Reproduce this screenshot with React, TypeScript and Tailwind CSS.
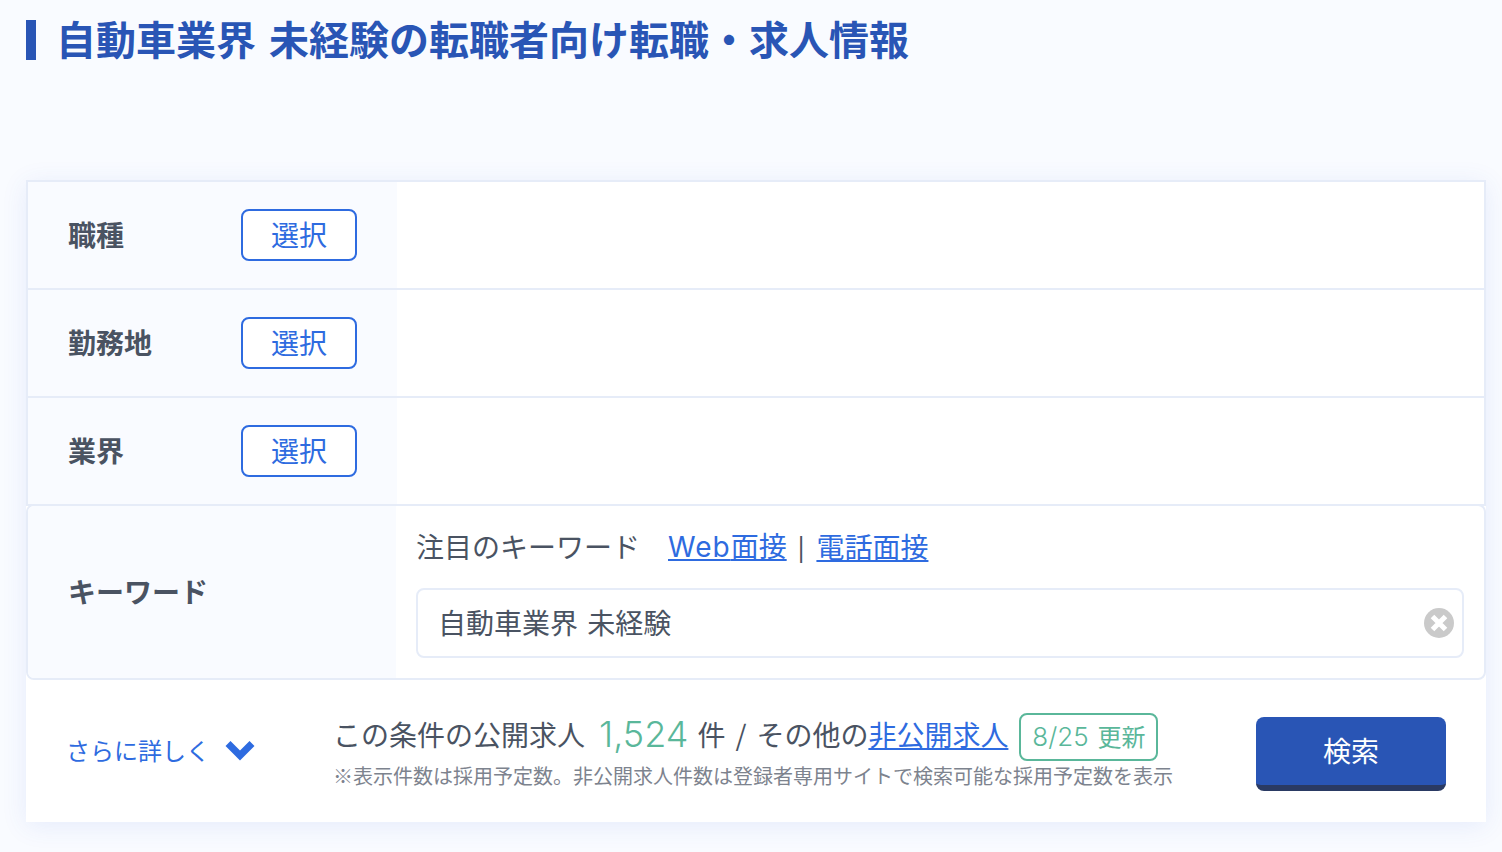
import React from "react";

const font = { fontFamily: '"Noto Sans CJK JP", "Noto Sans", sans-serif' };
const latin = { fontFamily: 'Inter, "Noto Sans CJK JP", sans-serif' };

// 職種・勤務地・業界の選択行
function SelectRow({ label }: { label: string }) {
  return (
    <div className="flex h-[110px] -mb-[2px] border-2 border-[#e6ecf8] bg-white">
      <div className="flex w-[369px] shrink-0 items-center justify-between bg-[#f9fbff] pl-[40px] pr-[40px]">
        <span className="pb-[2px] text-[28px] font-bold text-[#4a5362]">{label}</span>
        <button className="flex h-[52px] w-[116px] items-center justify-center rounded-[8px] border-2 border-[#2e6be0] bg-white pb-[2px] text-[28px] text-[#2e6be0]">
          選択
        </button>
      </div>
      <div className="flex-1" />
    </div>
  );
}

export default function App() {
  return (
    <div
      className="h-[852px] overflow-hidden bg-[#f9fbff] pl-[26px] pr-[16px] pt-[20px]"
      style={font}
    >
      <h1 className="flex h-[40px] items-center border-l-[10px] border-[#2955b5] pb-[4px] pl-[20px] text-[40px] font-bold leading-[40px] whitespace-nowrap text-[#2955b5] [word-spacing:4px]">
        自動車業界 未経験の転職者向け転職・求人情報
      </h1>

      <div className="mt-[120px] bg-white shadow-[0_4px_24px_rgba(60,100,220,0.1)]">
        <SelectRow label="職種" />
        <SelectRow label="勤務地" />
        <SelectRow label="業界" />

        <div className="flex h-[176px] overflow-hidden rounded-[8px] border-2 border-[#e6ecf8] bg-white">
          <div className="flex w-[368px] shrink-0 items-center bg-[#f9fbff] pl-[40px]">
            <span className="pb-[2px] text-[28px] font-bold text-[#4a5362]">キーワード</span>
          </div>
          <div className="flex flex-1 flex-col pl-[20px] pr-[20px] pt-[20px]">
            <div className="flex h-[40px] items-center text-[28px] whitespace-nowrap text-[#4a5362]">
              <span>注目のキーワード</span>
              <a className="ml-[28px] text-[#2e6be0] underline underline-offset-2">
                <span className="tracking-[1px]" style={latin}>Web</span>面接
              </a>
              <span className="ml-[11px] mr-[12px] text-[24px] font-medium">|</span>
              <a className="text-[#2e6be0] underline underline-offset-2">電話面接</a>
            </div>
            <div className="relative mt-[22px] flex h-[70px] items-center rounded-[8px] border-2 border-[#e6ecf8] pb-[2px] pl-[20px] text-[28px] text-[#4a5362] [word-spacing:3px]">
              自動車業界 未経験
              <svg
                className="absolute right-[8px] top-[18px]"
                width="30"
                height="30"
                viewBox="0 0 30 30"
              >
                <circle cx="15" cy="15" r="15" fill="#cacaca" />
                <path d="M8.5 8.5 21.5 21.5M21.5 8.5 8.5 21.5" stroke="#fff" strokeWidth="5" />
              </svg>
            </div>
          </div>
        </div>

        <div className="flex h-[142px] items-center pl-[40px] pr-[40px]">
          <div className="flex w-[267px] shrink-0 items-center">
            <span className="pb-[2px] text-[24px] whitespace-nowrap text-[#2e6be0]">さらに詳しく</span>
            <svg className="ml-[15px]" width="30" height="22" viewBox="0 0 30 22">
              <path d="M3 3.5 15 15.5 27 3.5" fill="none" stroke="#2e6be0" strokeWidth="7" />
            </svg>
          </div>
          <div className="flex-1 pt-[2px]">
            <div className="flex h-[48px] items-center whitespace-nowrap">
              <div className="flex items-center pb-[6px] text-[28px] text-[#4a5362]">
                <span>この条件の公開求人</span>
                <span className="ml-[14px] text-[36px] font-light text-[#5ab79a]" style={latin}>
                  1,524
                </span>
                <span className="ml-[9px]">件</span>
                <span className="mx-[10px]">/</span>
                <span>その他の</span>
                <a className="text-[#2e6be0] underline underline-offset-2">非公開求人</a>
              </div>
              <span className="ml-[11px] flex h-[48px] w-[139px] items-center justify-center rounded-[8px] border-2 border-[#5ab79a] pb-[2px] text-[24px] text-[#5ab79a]">
                <span className="text-[26px] font-light" style={latin}>8/25</span>
                <span className="ml-[9px]">更新</span>
              </span>
            </div>
            <p className="text-[20px] leading-[30px] whitespace-nowrap text-[#7d838e]">
              ※表示件数は採用予定数。非公開求人件数は登録者専用サイトで検索可能な採用予定数を表示
            </p>
          </div>
          <button className="mt-[6px] h-[74px] w-[190px] shrink-0 rounded-[8px] border-b-[6px] border-[#2a3a63] bg-[#2955b5] pb-[2px] text-[28px] text-white">
            検索
          </button>
        </div>
      </div>
    </div>
  );
}
